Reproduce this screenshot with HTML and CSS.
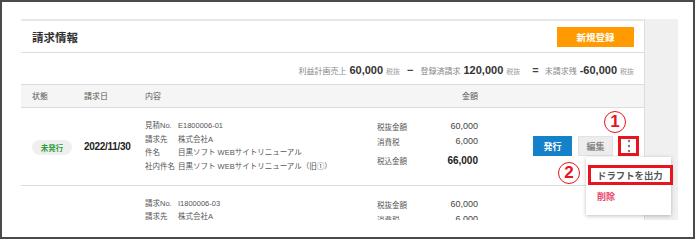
FILE: index.html
```html
<!DOCTYPE html>
<html lang="ja">
<head>
<meta charset="utf-8">
<link rel="stylesheet" href="styles.css">
</head>
<body>
<div class="frame">
  <div class="viewport">
    <section class="card">
      <header class="card-head">
        <h2 class="title">請求情報</h2>
        <button class="btn-new">新規登録</button>
      </header>
      <div class="summary"><span class="sum-label">利益計画売上</span><span class="sum-num">60,000</span><span class="sum-tax">税抜</span><span class="sum-op">−</span><span class="sum-label">登録済請求</span><span class="sum-num">120,000</span><span class="sum-tax">税抜</span><span class="sum-op eq">=</span><span class="sum-label">未請求残</span><span class="sum-num">-60,000</span><span class="sum-tax">税抜</span></div>
      <div class="thead">
        <div>状態</div>
        <div>請求日</div>
        <div>内容</div>
        <div class="th-amount">金額</div>
        <div></div>
      </div>
      <div class="row">
        <div class="cell-status"><span class="badge">未発行</span></div>
        <div class="cell-date">2022/11/30</div>
        <dl class="info">
          <dt>見積No.</dt><dd>E1800006-01</dd>
          <dt>請求先</dt><dd>株式会社A</dd>
          <dt>件名</dt><dd>目黒ソフト WEBサイトリニューアル</dd>
          <dt>社内件名</dt><dd>目黒ソフト WEBサイトリニューアル（旧①）</dd>
        </dl>
        <dl class="amounts">
          <dt>税抜金額</dt><dd>60,000</dd>
          <dt>消費税</dt><dd>6,000</dd>
          <dt class="total">税込金額</dt><dd class="total">66,000</dd>
        </dl>
        <div class="actions">
          <button class="btn-issue">発行</button>
          <button class="btn-edit">編集</button>
          <button class="btn-kebab marked" aria-label="その他">
            <svg width="4" height="14" viewBox="0 0 4 14"><circle cx="2" cy="2" r="1.2" fill="#777"/><circle cx="2" cy="7" r="1.2" fill="#777"/><circle cx="2" cy="12" r="1.2" fill="#777"/></svg>
          </button>
        </div>
      </div>
      <div class="row">
        <div class="cell-status"></div>
        <div class="cell-date"></div>
        <dl class="info">
          <dt>請求No.</dt><dd>I1800006-03</dd>
          <dt>請求先</dt><dd>株式会社A</dd>
        </dl>
        <dl class="amounts">
          <dt>税抜金額</dt><dd>60,000</dd>
          <dt>消費税</dt><dd>6,000</dd>
        </dl>
        <div class="actions"></div>
      </div>
    </section>
    <div class="side"></div>

    <ul class="menu">
      <li class="menu-item draft">ドラフトを出力</li>
      <li class="menu-item delete">削除</li>
      <li class="menu-mark"></li>
    </ul>

    <span class="callout callout-1">1</span>
    <span class="callout callout-2">2</span>
  </div>
</div>
</body>
</html>
```

FILE: styles.css
```css
html, body {
  margin: 0;
  padding: 0;
}
body {
  width: 700px;
  height: 241px;
  background: #fff;
  font-family: "Liberation Sans", "Noto Sans CJK JP", sans-serif;
  color: #444;
  overflow: hidden;
}
.frame {
  box-sizing: border-box;
  width: 695px;
  height: 239px;
  border: 2px solid #4a4a4a;
  padding: 17px 0 0 19px;
}
.viewport {
  position: relative;
  width: 657px;
  height: 201px;
  overflow: hidden;
  display: flex;
}
.card {
  box-sizing: border-box;
  width: 624px;
  flex: none;
  background: #fff;
  border-top: 2px solid #e8e8e8;
  border-right: 1px solid #dedede;
}
.side {
  flex: 1;
  background: #f0f0f0;
}

/* header */
.card-head {
  height: 31px;
  border-bottom: 1px solid #dcdcdc;
  display: flex;
  align-items: center;
  justify-content: space-between;
  padding: 0 10px 0 11px;
}
.title {
  margin: 0;
  font-family: "Noto Sans CJK JP", sans-serif;
  font-size: 11.5px;
  font-weight: 700;
  color: #333;
}
.btn-new {
  width: 77px;
  height: 20px;
  border: 0;
  padding: 0;
  background: #ff9a00;
  color: #fff;
  font-family: "Noto Sans CJK JP", sans-serif;
  font-size: 9.5px;
  font-weight: 700;
}

/* summary */
.summary {
  height: 31px;
  line-height: 31px;
  border-bottom: 1px solid #dcdcdc;
  text-align: right;
  padding-right: 10px;
  white-space: nowrap;
}
.sum-label {
  font-family: "Noto Sans CJK JP", sans-serif;
  font-size: 8px;
  color: #888;
  margin-right: 3px;
}
.sum-num {
  font-size: 11px;
  font-weight: 700;
  color: #333;
  margin-right: 3px;
}
.sum-tax {
  font-family: "Noto Sans CJK JP", sans-serif;
  font-size: 7px;
  color: #999;
}
.sum-op {
  font-size: 11px;
  font-weight: 700;
  color: #444;
  margin: 0 7px 0 7px;
}
.sum-op.eq {
  margin: 0 6px 0 12px;
}

/* table head */
.thead {
  display: grid;
  grid-template-columns: 52px 61px 232px 101px 1fr;
  padding-left: 11px;
  height: 22px;
  line-height: 22px;
  background: #f5f5f5;
  border-bottom: 1px solid #dcdcdc;
  font-family: "Noto Sans CJK JP", sans-serif;
  font-size: 8px;
  color: #555;
}
.th-amount {
  text-align: right;
}

/* rows */
.row {
  display: grid;
  grid-template-columns: 52px 61px 232px 101px 1fr;
  align-items: start;
  padding: 11px 0 11px 11px;
  min-height: 54px;
  border-bottom: 1px solid #dcdcdc;
}
.cell-status,
.cell-date,
.actions {
  align-self: center;
}
.badge {
  display: inline-block;
  width: 40px;
  height: 15px;
  line-height: 15px;
  border-radius: 8px;
  background: #efefef;
  color: #2e9e3a;
  text-align: center;
  font-family: "Noto Sans CJK JP", sans-serif;
  font-size: 7.5px;
  font-weight: 700;
}
.cell-date {
  font-size: 10px;
  font-weight: 700;
  letter-spacing: -0.3px;
  color: #222;
}
.info {
  margin: 0;
  display: grid;
  grid-template-columns: 33px 1fr;
  font-family: "Liberation Sans", "Noto Sans CJK JP", sans-serif;
  font-size: 7.5px;
  line-height: 13.67px;
  color: #555;
  white-space: nowrap;
}
.info dt, .info dd {
  margin: 0;
}
.amounts {
  margin: 0;
  display: grid;
  grid-template-columns: auto 1fr;
  line-height: 15px;
  white-space: nowrap;
}
.amounts dt {
  margin: 0;
  font-family: "Noto Sans CJK JP", sans-serif;
  font-size: 7.5px;
  color: #555;
}
.amounts dd {
  margin: 0;
  text-align: right;
  font-size: 9px;
  color: #444;
}
.amounts .total {
  margin-top: 4px;
}
.amounts dd.total {
  font-size: 10px;
  font-weight: 700;
  color: #222;
}

/* actions */
.actions {
  display: flex;
  justify-content: flex-end;
  align-items: center;
  padding-right: 5px;
}
.actions button {
  height: 20px;
  border: 0;
  padding: 0;
  font-family: "Noto Sans CJK JP", sans-serif;
  font-size: 9px;
  font-weight: 700;
}
.btn-issue {
  width: 39px;
  background: #1481c9;
  color: #fff;
}
.btn-edit {
  width: 35px;
  margin-left: 6px;
  background: #ededed;
  color: #888;
  box-shadow: inset 0 0 0 1px #e2e2e2;
}
.btn-kebab {
  width: 21px;
  margin-left: 5px;
  background: transparent;
  display: flex;
  align-items: center;
  justify-content: center;
}
.marked {
  outline: 3px solid #e8141e;
  outline-offset: -3px;
}

/* dropdown */
.menu {
  position: absolute;
  left: 565px;
  top: 138px;
  width: 85px;
  margin: 0;
  padding: 7px 0;
  list-style: none;
  background: #fff;
  box-shadow: 0 1px 4px rgba(0, 0, 0, 0.25);
  font-family: "Noto Sans CJK JP", sans-serif;
  font-weight: 700;
}
.menu-item {
  height: 22px;
  line-height: 22px;
  padding-left: 11px;
  white-space: nowrap;
}
.draft {
  font-size: 9.4px;
  color: #555;
}
.delete {
  font-size: 9px;
  color: #e8456b;
}
.menu-mark {
  position: absolute;
  left: 2px;
  top: 8px;
  width: 85px;
  height: 20px;
  box-sizing: border-box;
  border: 3px solid #e8141e;
}

/* callouts */
.callout {
  position: absolute;
  box-sizing: border-box;
  width: 22px;
  height: 22px;
  border: 1.5px solid #e8141e;
  border-radius: 50%;
  color: #e8141e;
  font-size: 17px;
  font-weight: 700;
  line-height: 19px;
  text-align: center;
  background: #fff;
}
.callout-1 {
  left: 583px;
  top: 92px;
}
.callout-2 {
  left: 537px;
  top: 143px;
}
```
